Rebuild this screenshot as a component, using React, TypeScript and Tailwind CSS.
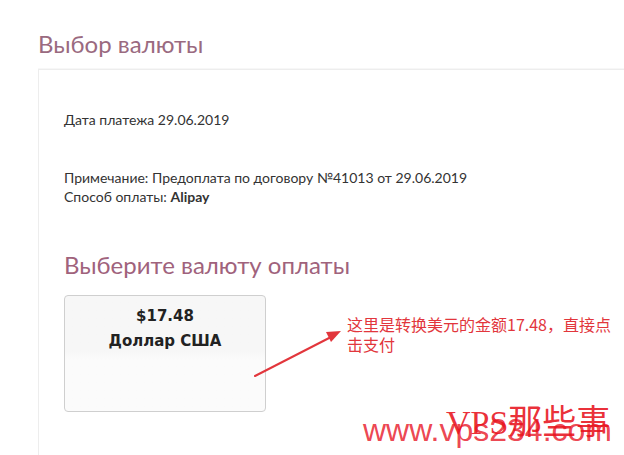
import React from 'react';

const Arrow = () => (
  <svg
    className="pointer-events-none absolute left-0 top-0"
    width="624"
    height="455"
    viewBox="0 0 624 455"
  >
    <line x1="255" y1="376" x2="333" y2="336" stroke="#e2363c" strokeWidth="2" strokeLinecap="round" />
    <polygon points="341,331 326,332 331,342" fill="#e2363c" />
  </svg>
);

export default function App() {
  return (
    <div className="relative h-[455px] w-[624px] overflow-hidden bg-white font-['Lato','Liberation_Sans',sans-serif] text-[#333]">
      <div className="pl-[38px] pt-[30px]">
        <h1 className="text-[24px] leading-[28px] font-normal text-[#9a6a80]">Выбор валюты</h1>

        <div className="mt-[11px] h-[400px] border-l border-t border-[#ededed] pl-[25px] pt-[40px] shadow-[0_-1px_0_#f7f7f7]">
          <p className="text-[14px] leading-[19px]">Дата платежа 29.06.2019</p>

          <div className="mt-[39px] text-[14px] leading-[19px]">
            <p>Примечание: Предоплата по договору №41013 от 29.06.2019</p>
            <p>
              Способ оплаты: <b className="font-bold">Alipay</b>
            </p>
          </div>

          <h2 className="mt-[45px] text-[24px] leading-[28px] font-normal text-[#a0627c]">Выберите валюту оплаты</h2>

          <div className="mt-[16px] flex h-[117px] w-[202px] flex-col rounded-[4px] border border-[#cfcfcf] bg-gradient-to-b from-[#f7f7f7] from-48% to-[#fbfbfb] to-56% pt-[8px] text-center font-['DejaVu_Sans',sans-serif] text-[15px] font-bold leading-[25px] text-[#222]">
            <span>$17.48</span>
            <span>Доллар США</span>
          </div>
        </div>
      </div>

      <div className="absolute left-[347px] top-[314px] font-['Noto_Sans_CJK_SC',sans-serif] text-[16px] leading-[20px] text-[#e2363c]">
        这里是转换美元的金额17.48，直接点
        <br />
        击支付
      </div>

      <Arrow />

      <div className="pointer-events-none absolute left-[363px] top-[413px] font-['Liberation_Sans',sans-serif] text-[32px] leading-[34px] text-[#ea2f3c]/90">
        www.vps234.com
      </div>
      <div className="pointer-events-none absolute left-[446px] top-[403px] font-['Liberation_Serif','Noto_Sans_CJK_SC',serif] text-[34px] leading-[40px] text-[#e8141e]/90">
        VPS那些事
      </div>
    </div>
  );
}
